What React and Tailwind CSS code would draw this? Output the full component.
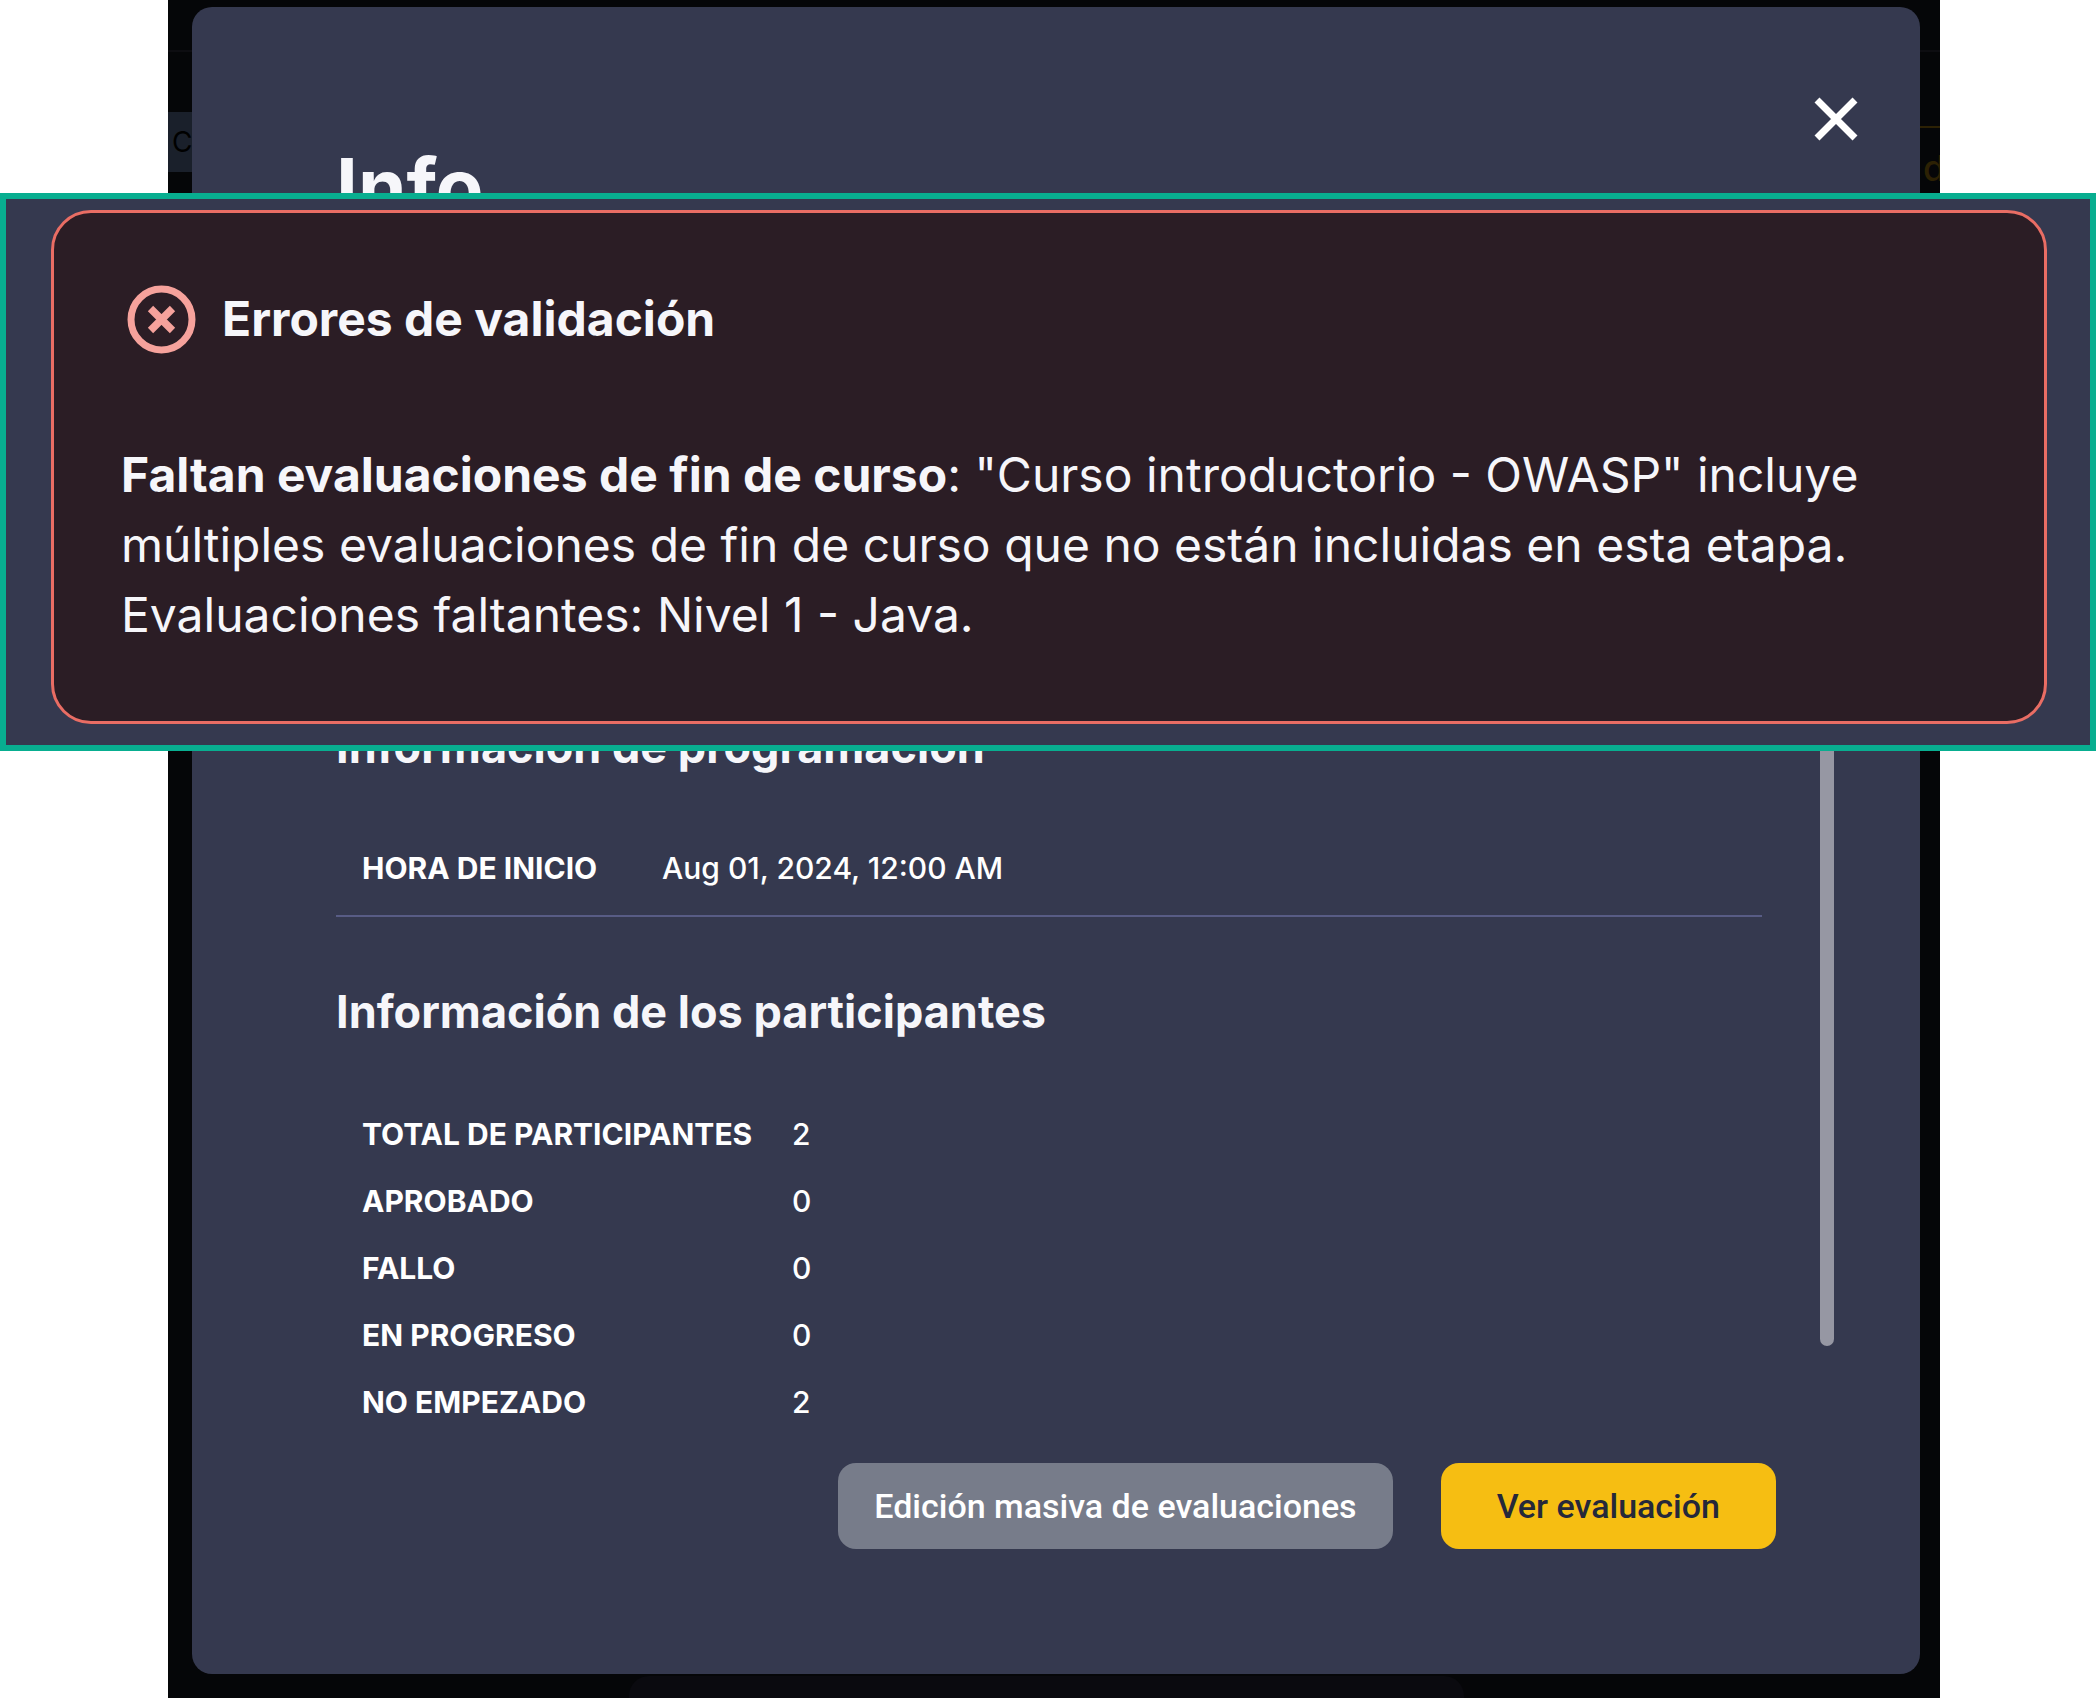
import React from 'react';

const participantRows = [
    { label: 'TOTAL DE PARTICIPANTES', value: 2 },
    { label: 'APROBADO', value: 0 },
    { label: 'FALLO', value: 0 },
    { label: 'EN PROGRESO', value: 0 },
    { label: 'NO EMPEZADO', value: 2 },
];

function CloseIcon() {
    return (
        <svg viewBox="0 0 48 48" className="w-12 h-12" fill="none" stroke="currentColor" strokeWidth="7">
            <path d="M5 5L43 43M43 5L5 43" />
        </svg>
    );
}

function ErrorIcon() {
    return (
        <svg viewBox="0 0 70 70" className="w-[70px] h-[70px] text-[#f6a29c]" fill="none" stroke="currentColor">
            <circle cx="34.5" cy="35.5" r="30.5" strokeWidth="7" />
            <path d="M23.5 24.5L45.5 46.5M45.5 24.5L23.5 46.5" strokeWidth="7.5" />
        </svg>
    );
}

function InfoRow({ label, value, labelClass }) {
    return (
        <div className="flex pl-[26px] text-[30px] leading-[67px] text-white">
            <dt className={`font-bold whitespace-nowrap ${labelClass}`}>{label}</dt>
            <dd className="font-medium whitespace-nowrap">{value}</dd>
        </div>
    );
}

// Dimmed page that stays visible around the modal
function PageBehind() {
    return (
        <div className="absolute inset-0 overflow-hidden" aria-hidden="true">
            <div className="absolute inset-x-0 top-[50px] h-[2px] bg-[#0d0d11]" />
            <div className="absolute left-0 top-[112px] w-40 h-[60px] pl-1 bg-[#1a202b] text-black text-[28px] leading-[60px]">
                Curso
            </div>
            <div className="absolute right-0 w-5 top-[126px] border-t-2 border-[#2c2104] pl-[3px] text-[#2c2104] text-[36px] leading-[80px] font-medium">
                d
            </div>
            <div className="absolute left-[461px] right-[476px] bottom-0 h-[22px] rounded-t-[20px] bg-[#0a0a0f]" />
        </div>
    );
}

function ErrorBanner() {
    return (
        <div className="absolute inset-x-0 top-[193px] border-6 border-[#08ae90] bg-[#35394f] pt-[11px] pb-[21px] pl-[45px] pr-[43px]">
            <div role="alert" className="border-3 border-[#e96d64] rounded-[40px] bg-[#2b1d25] px-[67px] py-[71px] text-[#f6f6fa]">
                <div className="flex items-center gap-[25px] pl-1.5">
                    <ErrorIcon />
                    <h2 className="text-[48px] leading-[70px] font-bold">Errores de validación</h2>
                </div>
                <p className="mt-[86px] text-[48px] leading-[70px] whitespace-nowrap">
                    <strong className="font-bold">Faltan evaluaciones de fin de curso</strong>: "Curso introductorio - OWASP" incluye
                    <br />
                    múltiples evaluaciones de fin de curso que no están incluidas en esta etapa.
                    <br />
                    Evaluaciones faltantes: Nivel 1 - Java.
                </p>
            </div>
        </div>
    );
}

export default function App() {
    return (
        <main className="relative min-h-screen bg-white pl-[168px] pr-[156px] font-['Inter',sans-serif]">
            <div className="relative min-h-screen bg-[#050608] pt-[7px] pb-6 pl-6 pr-5">
                <PageBehind />

                <section role="dialog" aria-label="Info" className="relative rounded-[20px] bg-[#35394f] pb-[125px]">
                    {/* Header */}
                    <header className="flex items-start justify-between pt-[88px] pl-36 pr-[60px]">
                        <h1 className="mt-14 text-[78px] leading-[72px] font-bold text-[#f6f6fa]">Info</h1>
                        <button type="button" aria-label="Cerrar" className="text-white">
                            <CloseIcon />
                        </button>
                    </header>

                    <div className="flex pl-36 pr-[86px]">
                        <div className="flex-1 pt-[496px]">
                            <h2 className="text-[45px] leading-[56px] font-bold text-[#f6f6fa]">Información de programación</h2>
                            <dl className="mt-[60px] pb-[13px] border-b-2 border-[#585c85]">
                                <InfoRow label="HORA DE INICIO" value="Aug 01, 2024, 12:00 AM" labelClass="w-[300px]" />
                            </dl>

                            <h2 className="mt-[67px] text-[45px] leading-[56px] font-bold text-[#f6f6fa]">Información de los participantes</h2>
                            <dl className="mt-[61px]">
                                {participantRows.map((row) => (
                                    <InfoRow key={row.label} label={row.label} value={row.value} labelClass="w-[430px]" />
                                ))}
                            </dl>
                        </div>
                        <div className="w-[14px] ml-[58px] mt-20 mb-[90px] rounded-full bg-[#9697a3]" />
                    </div>

                    {/* Actions */}
                    <footer className="flex justify-end gap-12 mt-[27px] pr-36 font-['Roboto',sans-serif]">
                        <button type="button" className="h-[86px] px-9 rounded-[18px] bg-[#777c8a] text-white text-[34px] font-medium">
                            Edición masiva de evaluaciones
                        </button>
                        <button type="button" className="h-[86px] px-14 rounded-[18px] bg-[#f6be12] text-[#25283a] text-[34px] font-medium">
                            Ver evaluación
                        </button>
                    </footer>
                </section>
            </div>

            <ErrorBanner />
        </main>
    );
}
